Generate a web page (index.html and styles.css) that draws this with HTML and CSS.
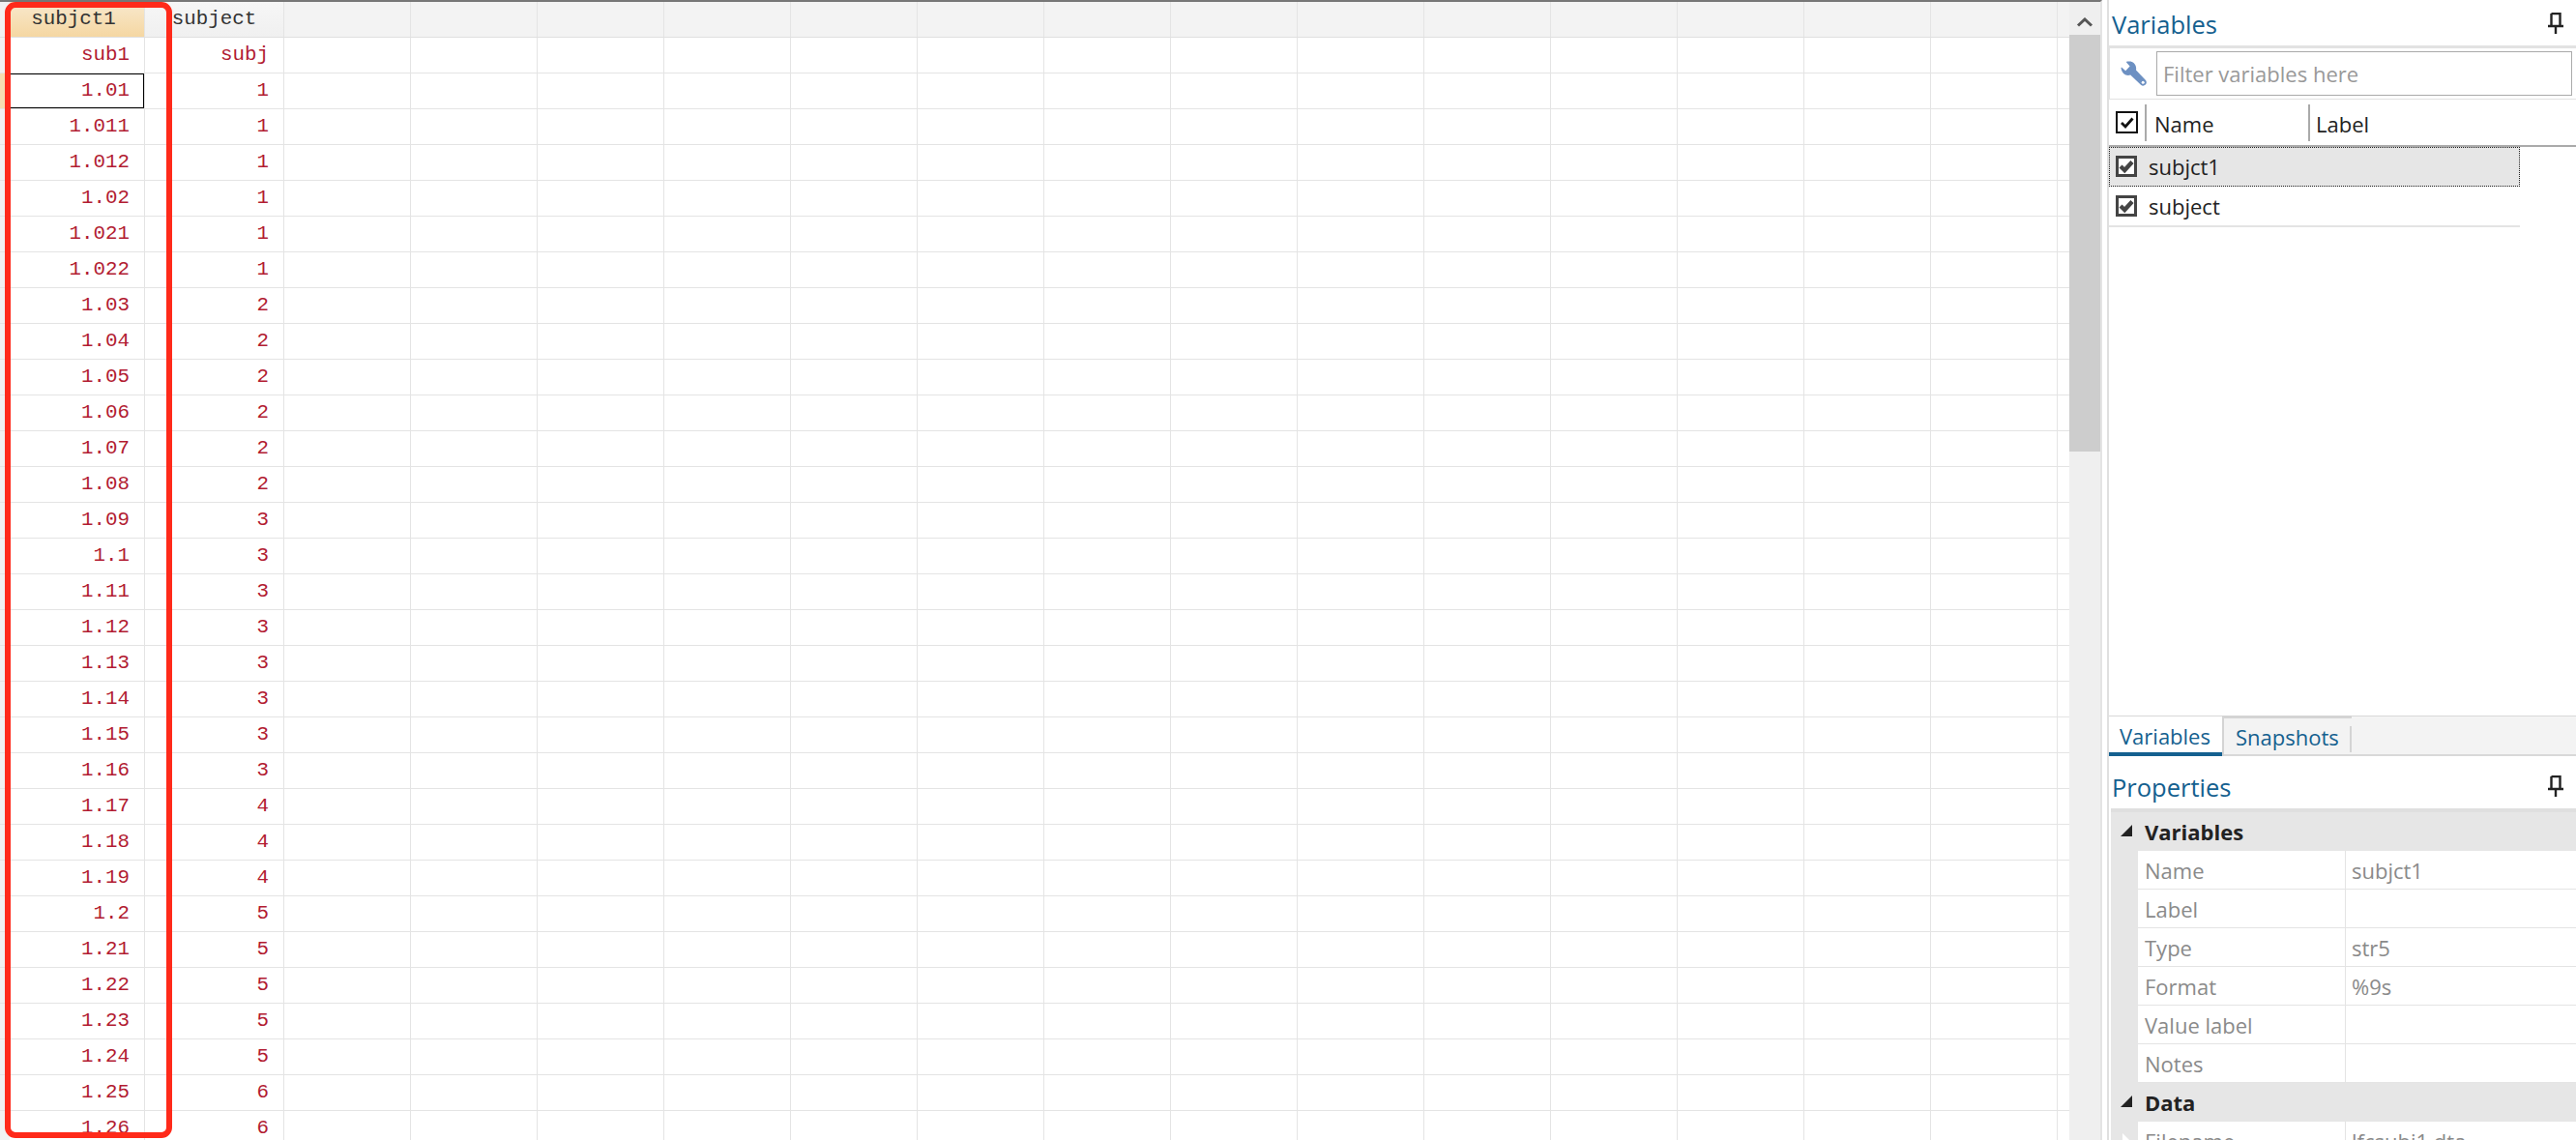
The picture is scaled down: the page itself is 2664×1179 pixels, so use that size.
FILE: index.html
```html
<!DOCTYPE html>
<html>
    <head>
        <title>Data Editor</title>
        <link rel="stylesheet" href="styles.css">
    </head>
    <body>
        <div class="app">
            <div class="browse">
                <div class="row headrow">
                    <div class="rowhead"></div>
                    <div class="cell c1 head sel">subjct1</div>
                    <div class="cell c2 head">subject</div>
                    <div class="rest"></div>
                </div>
                <div class="row"><div class="rowhead"></div><div class="cell c1">sub1</div><div class="cell c2">subj</div><div class="rest"></div></div>
                <div class="row"><div class="rowhead cur"></div><div class="cell c1 active">1.01</div><div class="cell c2">1</div><div class="rest"></div></div>
                <div class="row"><div class="rowhead"></div><div class="cell c1">1.011</div><div class="cell c2">1</div><div class="rest"></div></div>
                <div class="row"><div class="rowhead"></div><div class="cell c1">1.012</div><div class="cell c2">1</div><div class="rest"></div></div>
                <div class="row"><div class="rowhead"></div><div class="cell c1">1.02</div><div class="cell c2">1</div><div class="rest"></div></div>
                <div class="row"><div class="rowhead"></div><div class="cell c1">1.021</div><div class="cell c2">1</div><div class="rest"></div></div>
                <div class="row"><div class="rowhead"></div><div class="cell c1">1.022</div><div class="cell c2">1</div><div class="rest"></div></div>
                <div class="row"><div class="rowhead"></div><div class="cell c1">1.03</div><div class="cell c2">2</div><div class="rest"></div></div>
                <div class="row"><div class="rowhead"></div><div class="cell c1">1.04</div><div class="cell c2">2</div><div class="rest"></div></div>
                <div class="row"><div class="rowhead"></div><div class="cell c1">1.05</div><div class="cell c2">2</div><div class="rest"></div></div>
                <div class="row"><div class="rowhead"></div><div class="cell c1">1.06</div><div class="cell c2">2</div><div class="rest"></div></div>
                <div class="row"><div class="rowhead"></div><div class="cell c1">1.07</div><div class="cell c2">2</div><div class="rest"></div></div>
                <div class="row"><div class="rowhead"></div><div class="cell c1">1.08</div><div class="cell c2">2</div><div class="rest"></div></div>
                <div class="row"><div class="rowhead"></div><div class="cell c1">1.09</div><div class="cell c2">3</div><div class="rest"></div></div>
                <div class="row"><div class="rowhead"></div><div class="cell c1">1.1</div><div class="cell c2">3</div><div class="rest"></div></div>
                <div class="row"><div class="rowhead"></div><div class="cell c1">1.11</div><div class="cell c2">3</div><div class="rest"></div></div>
                <div class="row"><div class="rowhead"></div><div class="cell c1">1.12</div><div class="cell c2">3</div><div class="rest"></div></div>
                <div class="row"><div class="rowhead"></div><div class="cell c1">1.13</div><div class="cell c2">3</div><div class="rest"></div></div>
                <div class="row"><div class="rowhead"></div><div class="cell c1">1.14</div><div class="cell c2">3</div><div class="rest"></div></div>
                <div class="row"><div class="rowhead"></div><div class="cell c1">1.15</div><div class="cell c2">3</div><div class="rest"></div></div>
                <div class="row"><div class="rowhead"></div><div class="cell c1">1.16</div><div class="cell c2">3</div><div class="rest"></div></div>
                <div class="row"><div class="rowhead"></div><div class="cell c1">1.17</div><div class="cell c2">4</div><div class="rest"></div></div>
                <div class="row"><div class="rowhead"></div><div class="cell c1">1.18</div><div class="cell c2">4</div><div class="rest"></div></div>
                <div class="row"><div class="rowhead"></div><div class="cell c1">1.19</div><div class="cell c2">4</div><div class="rest"></div></div>
                <div class="row"><div class="rowhead"></div><div class="cell c1">1.2</div><div class="cell c2">5</div><div class="rest"></div></div>
                <div class="row"><div class="rowhead"></div><div class="cell c1">1.21</div><div class="cell c2">5</div><div class="rest"></div></div>
                <div class="row"><div class="rowhead"></div><div class="cell c1">1.22</div><div class="cell c2">5</div><div class="rest"></div></div>
                <div class="row"><div class="rowhead"></div><div class="cell c1">1.23</div><div class="cell c2">5</div><div class="rest"></div></div>
                <div class="row"><div class="rowhead"></div><div class="cell c1">1.24</div><div class="cell c2">5</div><div class="rest"></div></div>
                <div class="row"><div class="rowhead"></div><div class="cell c1">1.25</div><div class="cell c2">6</div><div class="rest"></div></div>
                <div class="row"><div class="rowhead"></div><div class="cell c1">1.26</div><div class="cell c2">6</div><div class="rest"></div></div>
                <div class="redbox"></div>
            </div>

            <div class="vscroll">
                <div class="arrow">
                    <svg width="18" height="10" viewBox="0 0 18 10"><path d="M2 8.5 L9 2 L16 8.5" fill="none" stroke="#555" stroke-width="3"/></svg>
                </div>
                <div class="thumb"></div>
            </div>
            <div class="split"></div>

            <div class="side">
                <div class="title vartitle">
                    <span>Variables</span>
                    <svg class="pin" width="16" height="22" viewBox="0 0 16 22"><path d="M3.5 1 H12.5 V13 M3.5 1 V13 M0 14 H16 M8 15 V22" fill="none" stroke="#222" stroke-width="2.4"/></svg>
                </div>
                <div class="filter">
                    <svg class="wrench" width="27" height="26" viewBox="0 0 27 26"><path d="M6.5 .5 L10.5 .6 C14.5 1.5 16.8 5.5 16 9.5 L26 20 C27.2 21.6 27 23.4 25.8 24.6 C24.4 26 22.4 26 21 24.8 L10.2 14.6 C5.5 16 1.2 13 .5 7.2 L1 6.4 L5.2 10.2 L9.6 5.6 L6 1.4 Z" fill="#6d90c2"/><circle cx="23.2" cy="22.2" r="1.5" fill="#fff"/></svg>
                    <div class="filterbox">Filter variables here</div>
                </div>
                <div class="listhead">
                    <svg class="check" width="23" height="23" viewBox="0 0 23 23"><rect x="1" y="1" width="21" height="21" fill="#fff" stroke="#111" stroke-width="2"/><path d="M6 12 L10 16 L17.5 7.5" fill="none" stroke="#111" stroke-width="2.8"/></svg>
                    <div class="hname">Name</div>
                    <div class="hlabel">Label</div>
                </div>
                <div class="list">
                    <div class="item picked">
                        <svg class="tick" width="22" height="22" viewBox="0 0 22 22"><rect x="1.5" y="1.5" width="19" height="19" fill="#fff" stroke="#444" stroke-width="3"/><path d="M5 11 L9.2 15 L17 6.5" fill="none" stroke="#444" stroke-width="4.4"/></svg>
                        <span>subjct1</span>
                    </div>
                    <div class="item">
                        <svg class="tick" width="22" height="22" viewBox="0 0 22 22"><rect x="1.5" y="1.5" width="19" height="19" fill="#fff" stroke="#444" stroke-width="3"/><path d="M5 11 L9.2 15 L17 6.5" fill="none" stroke="#444" stroke-width="4.4"/></svg>
                        <span>subject</span>
                    </div>
                </div>
                <div class="tabs">
                    <div class="tab on">Variables</div>
                    <div class="tab off">Snapshots</div>
                </div>
                <div class="title proptitle">
                    <span>Properties</span>
                    <svg class="pin" width="16" height="22" viewBox="0 0 16 22"><path d="M3.5 1 H12.5 V13 M3.5 1 V13 M0 14 H16 M8 15 V22" fill="none" stroke="#222" stroke-width="2.4"/></svg>
                </div>
                <div class="props">
                    <div class="group"><i class="tri"></i>Variables</div>
                    <div class="prop"><div class="pname">Name</div><div class="pval">subjct1</div></div>
                    <div class="prop"><div class="pname">Label</div><div class="pval"></div></div>
                    <div class="prop"><div class="pname">Type</div><div class="pval">str5</div></div>
                    <div class="prop"><div class="pname">Format</div><div class="pval">%9s</div></div>
                    <div class="prop"><div class="pname">Value label</div><div class="pval"></div></div>
                    <div class="prop"><div class="pname">Notes</div><div class="pval"></div></div>
                    <div class="group"><i class="tri"></i>Data</div>
                    <div class="prop more"><div class="pname">Filename</div><div class="pval">lfcsubj1.dta</div></div>
                </div>
            </div>
        </div>
    </body>
</html>
```

FILE: styles.css
```css
*{
    box-sizing: border-box;
}
body{
    margin: 0;
    background-color: white;
    overflow: hidden;
}
.app{
    display: flex;
    width: 2664px;
    height: 1179px;
    overflow: hidden;
    font-family: "Open Sans", "Noto Sans", sans-serif;
}

/* data grid */
.browse{
    position: relative;
    width: 2140px;
    height: 1179px;
    overflow: hidden;
    border-top: 2px solid #777;
    font-family: "Liberation Mono", monospace;
    font-size: 20.8px;
    color: #b21c32;
}
.row{
    display: flex;
    height: 37px;
    border-bottom: 1px solid #e4e4e4;
}
.headrow{
    border-bottom: 1px solid #e0e0e0;
}
.rowhead{
    width: 10px;
    background-color: #f1f1f1;
}
.rowhead.cur{
    background-color: #f6ddb0;
}
.cell{
    display: flex;
    align-items: center;
    justify-content: flex-end;
    padding-right: 15px;
    padding-bottom: 2px;
    border-right: 1px solid #e4e4e4;
}
.c1{
    width: 140px;
}
.c2{
    width: 144px;
}
.head{
    justify-content: center;
    padding-right: 0;
    color: #333;
    background-image: linear-gradient(#f6f6f6, #f0f0f0);
}
.head.sel{
    padding-right: 7px;
    background-image: linear-gradient(#f8e8cd, #f5d7a2);
}
.active{
    box-shadow: inset 0 0 0 1px #000;
}
.rest{
    flex: 1;
    background-image: repeating-linear-gradient(to right, transparent 0, transparent 130px, #e4e4e4 130px, #e4e4e4 131px);
}
.headrow .rest{
    background-color: #f3f3f3;
}
.redbox{
    position: absolute;
    left: 5px;
    top: 0;
    width: 173px;
    height: 1175px;
    border: 6px solid #ff2a1a;
    border-radius: 11px;
}

/* scrollbar */
.vscroll{
    width: 34px;
    height: 1179px;
    border-top: 2px solid #777;
    border-right: 2px solid #e4e4e4;
    background-color: #efefef;
}
.arrow{
    display: flex;
    justify-content: center;
    align-items: center;
    height: 34px;
    padding-top: 8px;
}
.thumb{
    height: 431px;
    background-color: #cdcdcd;
}
.split{
    width: 7px;
    border-right: 2px solid #e0e0e0;
}

/* right hand panels */
.side{
    display: flex;
    flex-direction: column;
    flex: 1;
    min-width: 0;
    color: #222;
    font-size: 22px;
}
.title{
    display: flex;
    justify-content: space-between;
    padding-left: 3px;
    padding-right: 13px;
    font-size: 25.5px;
    color: #14608f;
}
.vartitle{
    height: 47px;
    padding-top: 7px;
    line-height: 36px;
}
.vartitle .pin{
    margin-top: 6px;
}
.filter{
    display: flex;
    align-items: center;
    height: 56px;
    margin-bottom: 0;
    border-top: 3px solid #e2e2e2;
    border-left: 1px solid #e2e2e2;
    border-bottom: 1px solid #e2e2e2;
    padding-left: 11px;
    padding-right: 4px;
    gap: 10px;
}
.wrench{
    flex: none;
}
.filterbox{
    flex: 1;
    height: 46px;
    line-height: 44px;
    padding-left: 6px;
    border: 1px solid #aaa;
    color: #999;
}
.listhead{
    display: flex;
    align-items: center;
    height: 49px;
    padding-left: 7px;
    border-bottom: 2px solid #aaa;
}
.check{
    flex: none;
}
.hname{
    width: 169px;
    height: 38px;
    margin-left: 7px;
    padding-left: 8px;
    line-height: 40px;
    border-left: 2px solid #aaa;
}
.hlabel{
    height: 38px;
    padding-left: 6px;
    line-height: 40px;
    border-left: 2px solid #aaa;
}
.list{
    flex: 1;
}
.item{
    display: flex;
    align-items: center;
    gap: 12px;
    width: 425px;
    height: 42px;
    padding-left: 7px;
    border-bottom: 2px solid #e4e4e4;
}
.picked{
    height: 41px;
    background-color: #e6e6e6;
    border-bottom-width: 1px;
    outline: 1px dotted #222;
    outline-offset: -1px;
}
.tick{
    flex: none;
}
.tabs{
    display: flex;
    height: 42px;
    background-color: #f3f3f3;
    border-top: 1px solid #d8d8d8;
    border-bottom: 2px solid #d8d8d8;
    color: #14608f;
}
.tab{
    line-height: 40px;
}
.on{
    width: 117px;
    padding-left: 11px;
    background-color: white;
    border-bottom: 4px solid #14608f;
    margin-bottom: -2px;
}
.off{
    width: 134px;
    padding-left: 12px;
    border-left: 2px solid #d4d4d4;
    border-top: 3px solid #d4d4d4;
    margin-top: -1px;
    margin-bottom: -2px;
    line-height: 38px;
    position: relative;
}
.off::after{
    content: "";
    position: absolute;
    right: 0;
    top: 8px;
    height: 27px;
    border-right: 2px solid #d4d4d4;
}
.proptitle{
    height: 54px;
    padding-top: 14px;
    line-height: 36px;
}
.proptitle .pin{
    margin-top: 6px;
}
.props{
    height: 343px;
    overflow: hidden;
    border-top: 4px solid #dfdfdf;
    margin-left: 2px;
    background-color: #e6e6e6;
}
.group{
    display: flex;
    align-items: center;
    height: 40px;
    padding-left: 35px;
    font-weight: 700;
    position: relative;
}
.tri{
    position: absolute;
    left: 10px;
    top: 13px;
    width: 0;
    height: 0;
    border-left: 12px solid transparent;
    border-bottom: 12px solid #222;
}
.prop{
    display: flex;
    height: 40px;
    margin-left: 28px;
    background-color: white;
    border-bottom: 1px solid #e4e4e4;
    color: #8a8a8a;
    line-height: 40px;
}
.pname{
    width: 215px;
    padding-left: 7px;
    border-right: 1px solid #e4e4e4;
}
.pval{
    flex: 1;
    padding-left: 6px;
}
.more{
    position: relative;
}
.more::before{
    content: "";
    position: absolute;
    left: -16px;
    top: 12px;
    border-left: 10px solid white;
    border-top: 10px solid transparent;
    border-bottom: 10px solid transparent;
}
```
